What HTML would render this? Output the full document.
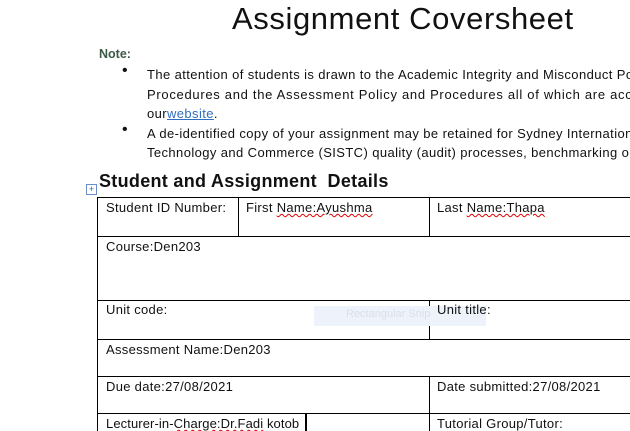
<!DOCTYPE html>
<html><head><meta charset="utf-8"><style>
body{margin:0;width:630px;height:431px;overflow:hidden;background:#fff;font-family:"Liberation Sans",sans-serif;color:#111;position:relative}
.a{position:absolute;white-space:nowrap}
.t{font-size:13px;letter-spacing:.3px}
.b{font-size:13px;letter-spacing:.4px}
.h{position:absolute;background:#000;height:1px}
.v{position:absolute;background:#000;width:1px}
.sq{text-decoration:underline wavy #d00;text-decoration-thickness:1px}
</style></head><body>
<div class="a" style="left:232px;top:1px;font-size:31px;font-weight:300;color:#111;letter-spacing:.6px">Assignment Coversheet</div>
<div class="a" style="left:99px;top:47px;font-size:12.5px;font-weight:bold;color:#3d5a48">Note:</div>
<div class="a" style="left:122px;top:62px;font-size:16px">•</div>
<div class="a b" style="left:147px;top:67px">The attention of students is drawn to the Academic Integrity and Misconduct Po</div>
<div class="a b" style="left:147px;top:87px;letter-spacing:.7px">Procedures and the Assessment Policy and Procedures all of which are access</div>
<div class="a b" style="left:147px;top:106px">our<span style="color:#2f6fbf;text-decoration:underline">website</span>.</div>
<div class="a" style="left:122px;top:121px;font-size:16px">•</div>
<div class="a b" style="left:147px;top:126px">A de-identified copy of your assignment may be retained for Sydney International</div>
<div class="a b" style="left:147px;top:145px">Technology and Commerce (SISTC) quality (audit) processes, benchmarking ormo</div>
<div class="a" style="left:86px;top:184px;width:9px;height:9px;border:1px solid #6a8fc8;font-size:9px;line-height:9px;text-align:center;color:#2a5fb0">+</div>
<div class="a" style="left:99px;top:171px;font-size:18px;font-weight:bold;letter-spacing:.3px">Student and Assignment&nbsp; Details</div>
<div class="h" style="left:97px;top:197px;width:533px"></div>
<div class="h" style="left:97px;top:236px;width:533px"></div>
<div class="h" style="left:97px;top:300px;width:533px"></div>
<div class="h" style="left:97px;top:339px;width:533px"></div>
<div class="h" style="left:97px;top:376px;width:533px"></div>
<div class="h" style="left:97px;top:413px;width:533px"></div>
<div class="v" style="left:97px;top:197px;height:234px"></div>
<div class="v" style="left:238px;top:197px;height:39px"></div>
<div class="v" style="left:429px;top:197px;height:39px"></div>
<div class="v" style="left:429px;top:300px;height:39px"></div>
<div class="v" style="left:429px;top:376px;height:55px"></div>
<div class="v" style="left:305px;top:413px;height:18px;width:2px"></div>
<div class="a" style="left:314px;top:306px;width:172px;height:20px;background:#eef3fb"></div>
<div class="a" style="left:346px;top:308px;font-size:11px;color:#d8e0ec">Rectangular Snip</div>
<div class="a t" style="left:106px;top:200px">Student ID Number:</div>
<div class="a t" style="left:246px;top:200px">First <span class="sq">Name:Ayushma</span></div>
<div class="a t" style="left:437px;top:200px">Last <span class="sq">Name:Thapa</span></div>
<div class="a t" style="left:106px;top:239px">Course:Den203</div>
<div class="a t" style="left:106px;top:302px">Unit code:</div>
<div class="a t" style="left:437px;top:302px">Unit title:</div>
<div class="a t" style="left:106px;top:342px">Assessment Name:Den203</div>
<div class="a t" style="left:106px;top:379px">Due date:27/08/2021</div>
<div class="a t" style="left:437px;top:379px">Date submitted:27/08/2021</div>
<div class="a t" style="left:106px;top:416px;letter-spacing:.1px">Lecturer-in-<span class="sq">Charge:Dr.Fadi</span> kotob</div>
<div class="a t" style="left:437px;top:416px">Tutorial Group/Tutor:</div>
</body></html>
